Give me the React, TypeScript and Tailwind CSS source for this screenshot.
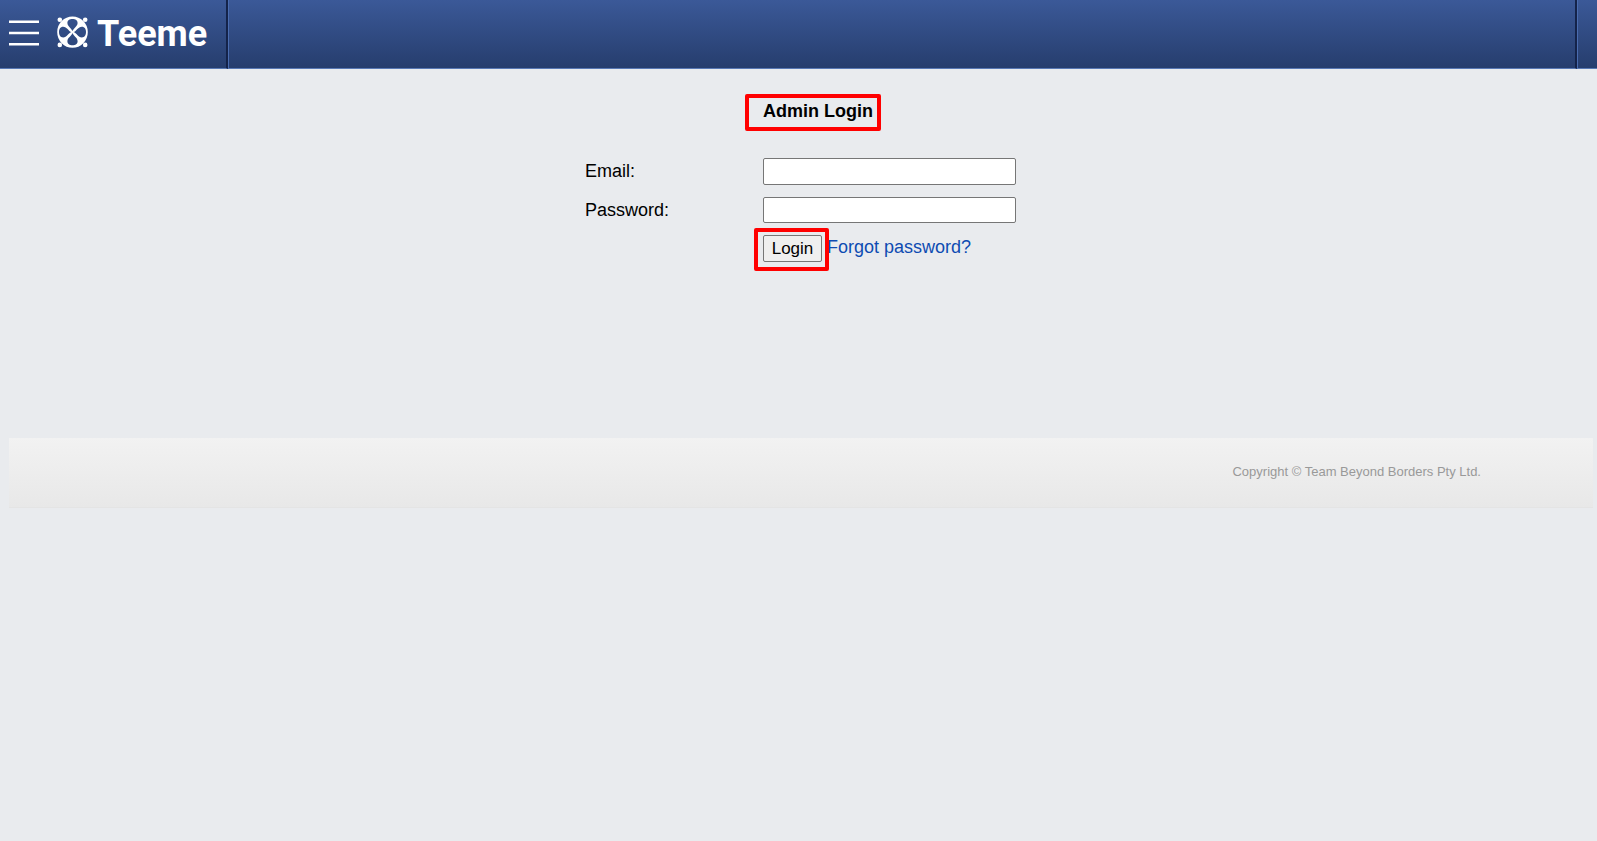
import React from "react";

function TeemeMark() {
  return (
    <svg viewBox="0 0 32 32" className="h-8 w-8" fill="#fff" aria-hidden="true">
      <circle cx="2.8" cy="3.8" r="2.3" />
      <circle cx="28.2" cy="3.8" r="2.3" />
      <circle cx="2.8" cy="28.9" r="2.3" />
      <circle cx="28.2" cy="28.9" r="2.3" />
      <path
        fillRule="evenodd"
        d="M15.5 .5A15.3 15.6 0 0 1 15.5 31.7A15.3 15.6 0 0 1 15.5 .5Z
           M15.5 15.1C14.6 12.2 10.4 10.4 10.4 6.9C10.4 4 12.6 2.9 15.5 2.9S20.6 4 20.6 6.9C20.6 10.4 16.4 12.2 15.5 15.1Z
           M15.5 17.1C14.6 20 10.4 21.8 10.4 25.3C10.4 28.2 12.6 29.3 15.5 29.3S20.6 28.2 20.6 25.3C20.6 21.8 16.4 20 15.5 17.1Z
           M14.4 16.1C11.6 15.2 9.8 10.7 6.2 10.7C3.2 10.7 2 13.2 2 16.1S3.2 21.5 6.2 21.5C9.8 21.5 11.6 17 14.4 16.1Z
           M16.6 16.1C19.4 15.2 21.2 10.7 24.8 10.7C27.8 10.7 29 13.2 29 16.1S27.8 21.5 24.8 21.5C21.2 21.5 19.4 17 16.6 16.1Z"
      />
    </svg>
  );
}

function MenuIcon() {
  return (
    <svg viewBox="0 0 30 26" className="h-[26px] w-[30px]" stroke="#fff" strokeWidth="2.4" aria-hidden="true">
      <path d="M0 1.7H30M0 13H30M0 24.3H30" />
    </svg>
  );
}

function Header() {
  return (
    <header className="flex h-[69px] bg-linear-to-b from-[#3b5998] to-[#263d6d]">
      <div className="flex w-[228px] items-start border-r-2 border-b border-r-[#14234a] border-b-[#5878b4] pl-[9px]">
        <button type="button" aria-label="Menu" className="mt-5">
          <MenuIcon />
        </button>
        <a href="#" className="mt-4 ml-[18px] flex items-start gap-2 text-white">
          <TeemeMark />
          <span className="font-[family-name:Roboto,sans-serif] text-[36px] leading-9 font-bold">Teeme</span>
        </a>
      </div>
      <div className="flex-1 border-r-2 border-b border-l border-r-[#14234a] border-b-[#5878b4] border-l-[#4a6cb0]" />
      <div className="w-5 border-b border-l border-b-[#5878b4] border-l-[#4a6cb0]" />
    </header>
  );
}

function LoginForm() {
  const field = "w-full rounded-xs border border-[#767676] bg-white px-1 text-[17px] outline-none";
  return (
    <form
      onSubmit={(e) => e.preventDefault()}
      className="mx-auto grid w-[432px] grid-cols-[178px_253px] pt-8 text-[18px] leading-5"
    >
      <div className="col-start-2 h-[57px]">
        <h1 className="relative inline-block font-bold">
          Admin Login
          <span className="pointer-events-none absolute -top-[7px] -left-[18px] h-[37px] w-[136px] rounded-xs border-4 border-[#ff0000]" />
        </h1>
      </div>
      <label htmlFor="email" className="pt-[3px]">
        Email:
      </label>
      <input id="email" type="email" className={`${field} h-[27px]`} />
      <label htmlFor="password" className="mt-3 pt-[3px]">
        Password:
      </label>
      <input id="password" type="password" className={`${field} mt-3 h-[26px]`} />
      <div className="col-start-2 mt-3 flex items-start gap-[5px]">
        <div className="relative">
          <button
            type="submit"
            className="h-[27px] w-[59px] rounded-xs border border-[#767676] bg-[#efefef] text-[17px]"
          >
            Login
          </button>
          <span className="pointer-events-none absolute -top-[7px] -left-[9px] h-[43px] w-[75px] rounded-xs border-4 border-[#ff0000]" />
        </div>
        <a href="#" className="pt-0.5 text-[#0e4bb2]">
          Forgot password?
        </a>
      </div>
    </form>
  );
}

export default function App() {
  return (
    <div className="min-h-screen bg-[#e9ebee] font-['Liberation_Sans',Arial,sans-serif] text-black">
      <Header />
      <div className="pr-1 pl-[9px]">
        <main className="min-h-[369px]">
          <LoginForm />
        </main>
        <footer className="flex h-[70px] items-start justify-end border-b border-[#e4e4e4] bg-linear-to-b from-[#f2f2f2] to-[#e8e8e8] pt-6 pr-28">
          <p className="text-[13px] leading-5 text-[#999999]">Copyright © Team Beyond Borders Pty Ltd.</p>
        </footer>
      </div>
    </div>
  );
}
